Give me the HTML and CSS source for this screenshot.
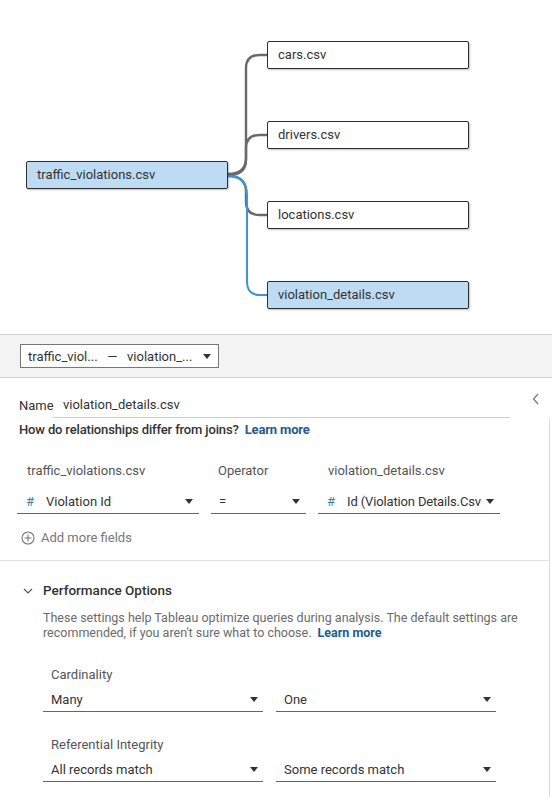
FILE: index.html
```html
<!DOCTYPE html>
<html lang="en">
<head>
<meta charset="utf-8">
<title>Relationship</title>
<link rel="stylesheet" href="styles.css">
</head>
<body>
<div class="canvas">
  <svg class="links" width="552" height="334" viewBox="0 0 552 334">
    <path class="link" d="M228,174 Q246,174 246,158 L246,68 Q246,55 260,55 L267,55"/>
    <path class="link" d="M228,175 Q246,175 246,160 L246,148 Q246,135 260,135 L267,135"/>
    <path class="link" d="M228,176 Q246,176 246,192 L246,202 Q246,215 260,215 L267,215"/>
    <path class="link link-active" d="M228,176 Q247,176 247,195 L247,282 Q247,295 260,295 L267,295"/>
  </svg>
  <div class="node node-selected n-root">traffic_violations.csv</div>
  <div class="node n-cars">cars.csv</div>
  <div class="node n-drivers">drivers.csv</div>
  <div class="node n-locations">locations.csv</div>
  <div class="node node-selected n-details">violation_details.csv</div>
</div>

<div class="toolbar">
  <div class="pair-select">
    <span>traffic_viol...&nbsp;&nbsp; —&nbsp;&nbsp; violation_...</span>
    <i class="caret"></i>
  </div>
</div>

<div class="name-row">
  <label class="name-label">Name</label>
  <div class="name-input">violation_details.csv</div>
  <svg class="collapse" width="8" height="12" viewBox="0 0 8 12"><polyline points="6,1 1.5,6 6,11" fill="none" stroke="#777" stroke-width="1.2"/></svg>
</div>

<div class="details">
  <div class="hint"><span>How do relationships differ from joins?</span><a class="learn">Learn more</a></div>

  <div class="fields">
    <div class="col col-left">
      <div class="col-label">traffic_violations.csv</div>
      <div class="dropdown"><span class="hash">#</span><span class="dd-text">Violation Id</span><i class="caret"></i></div>
    </div>
    <div class="col col-op">
      <div class="col-label">Operator</div>
      <div class="dropdown"><span class="dd-text">=</span><i class="caret"></i></div>
    </div>
    <div class="col col-right">
      <div class="col-label">violation_details.csv</div>
      <div class="dropdown"><span class="hash">#</span><span class="dd-text">Id (Violation Details.Csv</span><i class="caret"></i></div>
    </div>
  </div>

  <div class="add-fields">
    <svg width="14" height="14" viewBox="0 0 14 14"><circle cx="7" cy="7" r="6" fill="none" stroke="#777" stroke-width="1.1"/><path d="M7 3.5V10.5M3.5 7H10.5" stroke="#777" stroke-width="1.1"/></svg>
    <span>Add more fields</span>
  </div>

  <div class="perf">
    <div class="perf-head">
      <svg width="10" height="6" viewBox="0 0 10 6"><polyline points="1,1 5,5 9,1" fill="none" stroke="#555" stroke-width="1.2"/></svg>
      <span>Performance Options</span>
    </div>
    <div class="perf-desc">
      <div class="desc-line">These settings help Tableau optimize queries during analysis. The default settings are</div>
      <div class="desc-line"><span>recommended, if you aren't sure what to choose.</span><a class="learn">Learn more</a></div>
    </div>

    <div class="opt-label">Cardinality</div>
    <div class="opt-row">
      <div class="dropdown"><span class="dd-text">Many</span><i class="caret"></i></div>
      <div class="dropdown"><span class="dd-text">One</span><i class="caret"></i></div>
    </div>

    <div class="opt-label">Referential Integrity</div>
    <div class="opt-row">
      <div class="dropdown"><span class="dd-text">All records match</span><i class="caret"></i></div>
      <div class="dropdown"><span class="dd-text">Some records match</span><i class="caret"></i></div>
    </div>
  </div>
</div>
</body>
</html>
```

FILE: styles.css
```css
* { box-sizing: border-box; }

html, body {
  margin: 0;
  padding: 0;
  background: #fff;
}

body {
  width: 552px;
  height: 797px;
  overflow: hidden;
  font-family: Roboto, "Noto Sans", Arial, sans-serif;
  font-size: 13px;
  color: #333;
}

/* ---------- relationship canvas ---------- */
.canvas {
  position: relative;
  height: 334px;
}

.links {
  position: absolute;
  left: 0;
  top: 0;
}

.link {
  fill: none;
  stroke: #6a6a6a;
  stroke-width: 2.4;
}

.link-active {
  stroke: #3a96d6;
  stroke-width: 2;
}

.node {
  position: absolute;
  width: 202px;
  height: 28px;
  line-height: 26px;
  padding-left: 10px;
  background: #fff;
  border: 1px solid #2e2e2e;
  border-radius: 2px;
  box-shadow: 1px 1px 2px rgba(0, 0, 0, 0.25);
  color: #333;
  font-size: 13px;
  white-space: nowrap;
}

.node-selected { background: #bddbf2; }

.n-root { left: 26px; top: 161px; }
.n-cars { left: 267px; top: 41px; }
.n-drivers { left: 267px; top: 121px; }
.n-locations { left: 267px; top: 201px; }
.n-details { left: 267px; top: 281px; }

/* ---------- toolbar ---------- */
.toolbar {
  height: 44px;
  background: #f3f3f3;
  border-top: 1px solid #cfcfcf;
  border-bottom: 1px solid #cfcfcf;
  padding: 9px 0 0 20px;
}

.pair-select {
  width: 199px;
  height: 24px;
  background: #fff;
  border: 1px solid #777;
  display: flex;
  align-items: center;
  justify-content: space-between;
  padding: 0 7px 0 7px;
  font-size: 13px;
  color: #333;
  white-space: nowrap;
}

.caret {
  display: inline-block;
  flex: none;
  width: 0;
  height: 0;
  border-left: 4px solid transparent;
  border-right: 4px solid transparent;
  border-top: 5px solid #333;
}

/* ---------- name ---------- */
.name-row {
  position: relative;
  display: flex;
  align-items: flex-end;
  height: 40px;
  padding-left: 19px;
}

.name-label {
  line-height: 22px;
  padding-bottom: 1px;
  width: 34px;
}

.name-input {
  width: 457px;
  height: 24px;
  line-height: 22px;
  padding-left: 10px;
  border-bottom: 1px solid #d0d0d0;
}

.collapse {
  position: absolute;
  left: 532px;
  top: 15px;
}

/* ---------- details ---------- */
.details {
  width: 550px;
  height: 379px;
  border-right: 1px solid #dcdcdc;
}

.hint {
  display: flex;
  gap: 6px;
  padding: 4px 0 0 19px;
  line-height: 16px;
  font-weight: 500;
  letter-spacing: -0.15px;
  white-space: nowrap;
}

.learn {
  color: #1f5b8e;
  font-weight: 700;
}

.fields {
  display: flex;
  gap: 12px;
  padding: 25px 0 0 17px;
}

.col-left { width: 182px; }
.col-op { width: 95px; }
.col-right { width: 182px; }

.col-label {
  line-height: 16px;
  padding-left: 10px;
  color: #555;
  white-space: nowrap;
}

.col-op .col-label { padding-left: 7px; }

.dropdown {
  display: flex;
  align-items: center;
  height: 25px;
  border-bottom: 1px solid #666;
  padding: 0 6px 0 9px;
  margin-top: 10px;
  white-space: nowrap;
}

.col-op .dropdown { padding-left: 8px; }

.dropdown .dd-text {
  flex: 1;
  overflow: hidden;
}

.col-right .dd-text { letter-spacing: -0.15px; }

.dropdown .caret { margin-left: 4px; }

.hash {
  color: #3e7f9d;
  width: 20px;
  font-size: 13px;
}

.add-fields {
  display: flex;
  gap: 6px;
  padding: 16px 0 0 21px;
  color: #777;
  line-height: 16px;
  height: 47px;
  align-items: flex-start;
  border-bottom: 1px solid #e2e2e2;
}

.add-fields svg { margin-top: 1px; }

.perf {
  padding-left: 43px;
}

.perf-head {
  position: relative;
  padding-top: 20px;
  line-height: 18px;
  font-size: 13.5px;
  font-weight: 500;
  color: #333;
}

.perf-head svg {
  position: absolute;
  left: -20px;
  top: 27px;
}

.perf-desc {
  margin-top: 11px;
  font-size: 12.5px;
  line-height: 15px;
  color: #6b6b6b;
}

.desc-line {
  display: flex;
  gap: 6px;
  white-space: nowrap;
}

.opt-label {
  padding: 0 0 0 8px;
  margin-top: 27px;
  line-height: 16px;
  color: #555;
}

.opt-row {
  display: flex;
  gap: 13px;
}

.opt-row .dropdown {
  width: 220px;
  margin-top: 5px;
  height: 24px;
  padding: 0 5px 0 8px;
  color: #333;
}

.opt-row + .opt-label { margin-top: 25px; }
```
